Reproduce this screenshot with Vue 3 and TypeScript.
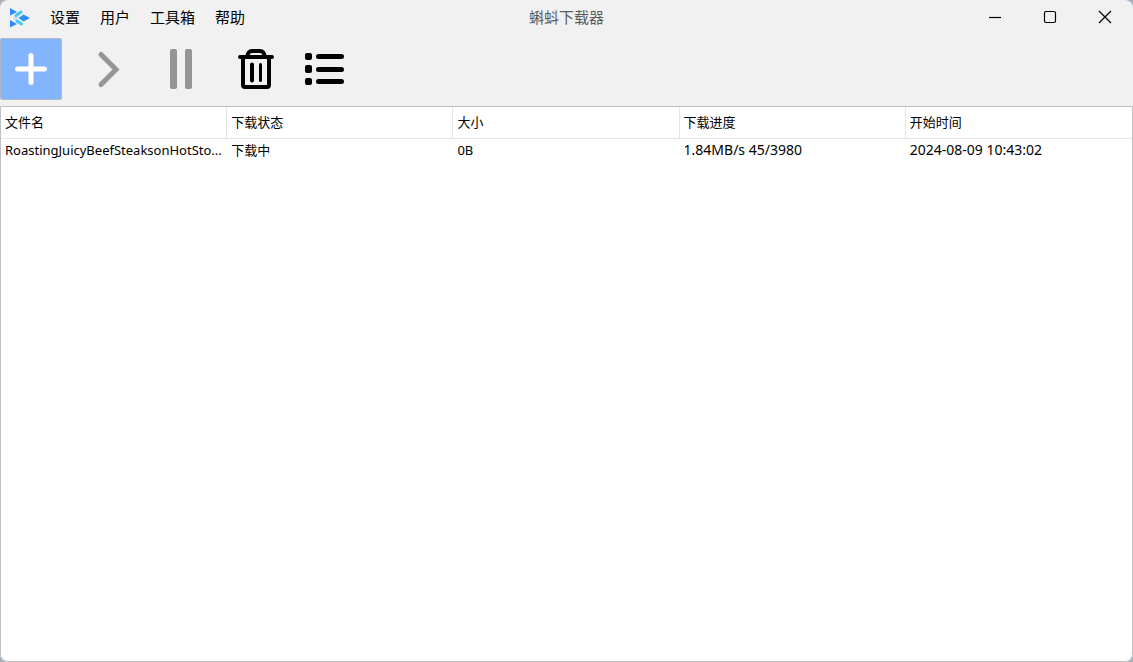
<script setup lang="ts">
interface Task {
  name: string
  status: string
  size: string
  progress: string
  startedAt: string
}

const menus: string[] = ['设置', '用户', '工具箱', '帮助']
const columns: string[] = ['文件名', '下载状态', '大小', '下载进度', '开始时间']
const tasks: Task[] = [
  {
    name: 'RoastingJuicyBeefSteaksonHotSto...',
    status: '下载中',
    size: '0B',
    progress: '1.84MB/s 45/3980',
    startedAt: '2024-08-09 10:43:02',
  },
]
</script>

<template>
  <div class="window">
    <header class="titlebar">
      <div class="side">
        <svg class="logo" viewBox="0 0 22 22" aria-hidden="true">
          <path d="M1 2 8 6 1 9.500Z" fill="#2d8cf5" />
          <path d="M1 14 8 18 1 21.500Z" fill="#2d8cf5" />
          <path d="M3.500 12 6.500 10 9.500 12 6.500 14Z" fill="#b9e0fb" />
          <path d="M7 9.500 12 6" stroke="#41c8fa" stroke-width="3" stroke-linecap="round" />
          <path d="M8 15 12.500 18" stroke="#41c8fa" stroke-width="3" stroke-linecap="round" />
          <path d="M9.500 12 14.500 8.500 21 12 14.500 15.500Z" fill="#2d8cf5" />
        </svg>
        <nav class="menus">
          <button v-for="menu in menus" :key="menu" type="button" class="menu">{{ menu }}</button>
        </nav>
      </div>
      <h1 class="title">蝌蚪下载器</h1>
      <div class="side controls">
        <button type="button" class="control" aria-label="最小化">
          <svg viewBox="0 0 14 14"><path d="M1 7.500H13" /></svg>
        </button>
        <button type="button" class="control" aria-label="最大化">
          <svg viewBox="0 0 14 14"><rect x="1.500" y="1.500" width="11" height="11" rx="1.500" /></svg>
        </button>
        <button type="button" class="control" aria-label="关闭">
          <svg viewBox="0 0 14 14"><path d="M1 1 13 13M13 1 1 13" /></svg>
        </button>
      </div>
    </header>

    <div class="toolbar" role="toolbar">
      <button type="button" class="tool active" aria-label="新建">
        <svg viewBox="0 0 62 62"><path d="M31 17.500V44.500M17.500 31H44.500" stroke="#fff" stroke-width="5" stroke-linecap="round" /></svg>
      </button>
      <button type="button" class="tool" aria-label="开始" disabled>
        <svg viewBox="0 0 62 62"><path d="M28 16.500 43 31.500 28 46.500" fill="none" stroke="#959595" stroke-width="5" stroke-linecap="round" /></svg>
      </button>
      <button type="button" class="tool" aria-label="暂停" disabled>
        <svg viewBox="0 0 62 62" fill="#959595">
          <rect x="24" y="11" width="7" height="40" rx="2" />
          <rect x="39" y="11" width="7" height="40" rx="2" />
        </svg>
      </button>
      <button type="button" class="tool" aria-label="删除">
        <svg viewBox="0 0 62 62" fill="none" stroke="#000">
          <path d="M21 19H53" stroke-width="4" stroke-linecap="round" />
          <path d="M24 19V47Q24 49 26 49H48Q50 49 50 47V19" stroke-width="4" />
          <path d="M28 19Q29 13 33 13H41Q45 13 46 19" stroke-width="4" />
          <path d="M33 26.500V42.500" stroke-width="4" stroke-linecap="round" />
          <path d="M41.500 26.500V42.500" stroke-width="3" stroke-linecap="round" />
        </svg>
      </button>
      <button type="button" class="tool" aria-label="列表">
        <svg viewBox="0 0 62 62">
          <rect x="13" y="15" width="7" height="7" rx="2" />
          <rect x="13" y="27" width="7" height="8" rx="2" />
          <rect x="13" y="40" width="7" height="7" rx="2" />
          <path d="M26.500 18.500H49.500M26.500 31.500H49.500M26.500 43.500H49.500" stroke="#000" stroke-width="5" stroke-linecap="round" />
        </svg>
      </button>
    </div>

    <main class="list">
      <table>
        <thead>
          <tr>
            <th v-for="column in columns" :key="column" scope="col">{{ column }}</th>
          </tr>
        </thead>
        <tbody>
          <tr v-for="task in tasks" :key="task.name">
            <td>{{ task.name }}</td>
            <td>{{ task.status }}</td>
            <td>{{ task.size }}</td>
            <td class="figures">{{ task.progress }}</td>
            <td class="figures">{{ task.startedAt }}</td>
          </tr>
        </tbody>
      </table>
    </main>
  </div>
</template>

<style>
body {
  background: #a9b0bb;
}
</style>

<style scoped>
.window {
  display: flex;
  flex-direction: column;
  height: 100vh;
  overflow: hidden;
  border-radius: 8px;
  background: #f1f1f1;
  color: #000;
  font-family: "Noto Sans", "Noto Sans CJK SC", sans-serif;
  font-size: 13px;
}
button {
  padding: 0;
  border: 0;
  background: none;
  color: inherit;
  font: inherit;
}
svg {
  display: block;
}
.titlebar {
  display: flex;
  align-items: center;
  height: 34px;
}
.side {
  display: flex;
  flex: 1;
  align-items: center;
}
.logo {
  width: 22px;
  height: 22px;
  margin: 0 19px 0 9px;
}
.menus {
  display: flex;
  gap: 20px;
}
.menu,
.title {
  margin: 0;
  font-size: 15px;
  font-weight: 400;
  line-height: 22px;
  white-space: nowrap;
}
.title {
  color: #5c5c5c;
}
.controls {
  justify-content: flex-end;
}
.control {
  display: flex;
  align-items: center;
  justify-content: center;
  width: 55px;
  height: 34px;
}
.control svg {
  width: 14px;
  height: 14px;
  margin-right: 1px;
  fill: none;
  stroke: #000;
  stroke-width: 1.2px;
}
.toolbar {
  display: flex;
  gap: 11px;
  padding: 4px 0 6px;
}
.tool {
  width: 62px;
  height: 62px;
}
.tool.active {
  border-radius: 3px;
  background: #83b5ff;
  box-shadow: inset 0 0 0 1px #b3b9c3;
}
.list {
  flex: 1;
  border: 1px solid #c0c0c0;
  border-radius: 0 0 8px 8px;
  background: #fff;
}
table {
  width: 100%;
  table-layout: fixed;
  border-collapse: separate;
  border-spacing: 0;
}
th,
td {
  box-sizing: border-box;
  padding: 0 0 2px 4px;
  overflow: hidden;
  text-align: left;
  font-weight: 400;
  line-height: 20px;
  white-space: nowrap;
}
th {
  height: 32px;
  border-bottom: 1px solid #e5e5e5;
  border-right: 1px solid #e5e5e5;
}
th:last-child {
  border-right: 0;
}
td {
  height: 24px;
}
.figures {
  font-size: 14px;
}
</style>
